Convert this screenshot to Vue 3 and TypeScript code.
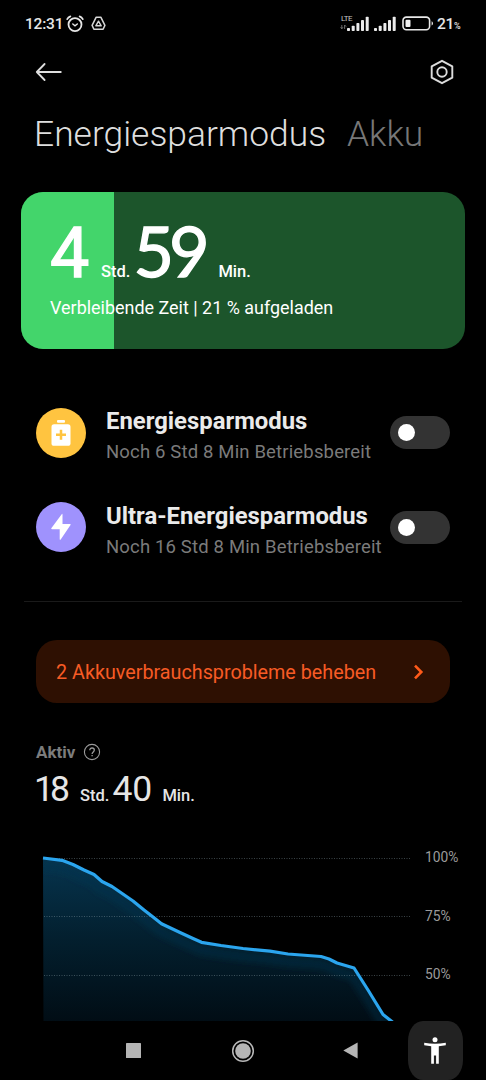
<script setup lang="ts">
interface SavingMode {
  id: 'saver' | 'ultra'
  title: string
  detail: string
}

const charge = 21

const modes: SavingMode[] = [
  { id: 'saver', title: 'Energiesparmodus', detail: 'Noch 6 Std 8 Min Betriebsbereit' },
  { id: 'ultra', title: 'Ultra-Energiesparmodus', detail: 'Noch 16 Std 8 Min Betriebsbereit' },
]

const levels: string[] = ['100%', '75%', '50%']

const curve: [number, number][] = [
  [43, 18], [62, 20.3], [73, 24.5], [84, 30], [94, 34.5], [102, 41.5], [112, 46.5],
  [133, 61], [144, 70], [153, 77], [161.5, 83.7], [180, 92.5], [193, 98.5], [201.5, 102.3],
  [221, 105.5], [243, 108.5], [270, 111.2], [288, 114], [321, 116.5], [329, 119],
  [337, 123], [354, 128], [368, 150], [383, 174.5], [395, 184],
]
const line = curve.map((p) => p.join(',')).join(' ')
const area = `${line} 395,190 43.5,190`
</script>

<template>
  <div class="screen">
    <header class="status">
      <div class="status-left">
        <span class="clock">12:31</span>
        <svg class="alarm" width="18" height="18" viewBox="0 0 18 18" fill="none" stroke="#e6e6e6" stroke-linecap="round">
          <circle cx="9" cy="9.6" r="6.5" stroke-width="1.8" />
          <path d="M6.8 9l2.2 1.8L11.3 9" stroke-width="1.5" />
          <path d="M1.2 4.2Q2.2 2.2 4.4 1.4M13.6 1.4Q15.8 2.2 16.8 4.2" stroke-width="1.7" />
        </svg>
        <svg class="drive" width="15" height="15" viewBox="0 0 15 15" fill="none" stroke="#d8d8d8" stroke-linejoin="round">
          <path d="M5.2 1.2h4.6l4.1 8.2-1.8 3.9H2.9L1.1 9.4z" stroke-width="1.5" />
          <path d="M7.5 5.2l2.7 4.6H4.8z" stroke-width="1.4" />
        </svg>
      </div>
      <div class="status-right">
        <div class="network">
          <span class="lte">LTE</span>
          <svg width="7" height="6" viewBox="0 0 7 6" fill="none" stroke="#777" stroke-width="0.9">
            <path d="M.6 3.2l1.2 1.6L3 3.2M1.8 4.8V1M4.6 5V1l1.5 1.6" />
          </svg>
        </div>
        <svg v-for="sim in 2" :key="sim" class="bars" width="22" height="15" viewBox="0 0 22 15" fill="#ececec">
          <rect x="0" y="12" width="3" height="3" rx="0.8" />
          <rect x="4.7" y="9.8" width="3" height="5.200" rx="0.8" />
          <rect x="9.400" y="7" width="3" height="8" rx="0.8" />
          <rect x="14" y="4" width="3" height="11" rx="0.8" />
          <rect x="18.700" y="0.8" width="3" height="14.200" rx="0.8" />
        </svg>
        <svg class="battery" width="32" height="15" viewBox="0 0 32 15">
          <rect x="1" y="1.1" width="26.6" height="12.6" rx="3.4" fill="none" stroke="#e8e8e8" stroke-width="1.6" />
          <rect x="3.5" y="3.7" width="5" height="7.4" rx="1" fill="#f0f0f0" />
          <path d="M29.6 5.3q1.4.5 1.4 2.1t-1.4 2.1z" fill="#e8e8e8" />
        </svg>
        <span class="percent">{{ charge }}<small>%</small></span>
      </div>
    </header>

    <nav class="toolbar">
      <svg width="28" height="20" viewBox="0 0 28 20" fill="none" stroke="#dedede" stroke-width="1.8" stroke-linecap="round" stroke-linejoin="round">
        <path d="M9.6 2L1.8 10l7.8 8M1.8 10h24" />
      </svg>
      <svg width="24" height="26" viewBox="0 0 24 26" fill="none" stroke="#dcdcdc" stroke-width="1.9" stroke-linejoin="round">
        <path d="M12 1.8l10.3 5.5v11.4L12 24.2 1.7 18.7V7.3z" />
        <circle cx="12" cy="13" r="4.7" />
      </svg>
    </nav>

    <div class="tabs">
      <span class="tab active">Energiesparmodus</span>
      <span class="tab">Akku</span>
    </div>

    <section class="card">
      <div class="fill" :style="{ width: charge + '%' }"></div>
      <div class="card-body">
        <div class="remaining">
          <span class="figure hours">4</span><span class="unit">Std.</span>
          <span class="figure minutes">59</span><span class="unit">Min.</span>
        </div>
        <div class="caption">Verbleibende Zeit | {{ charge }} % aufgeladen</div>
      </div>
    </section>

    <section class="modes">
      <div v-for="mode in modes" :key="mode.id" class="mode">
        <div class="badge" :class="mode.id">
          <svg v-if="mode.id === 'saver'" width="20" height="28" viewBox="0 0 20 28">
            <rect x="6" y="1" width="8" height="2.8" rx="1" fill="#fff" />
            <rect x="0.5" y="5.3" width="19" height="21.5" rx="2.6" fill="#fff" />
            <path d="M10 10.8v10M5 15.8h10" stroke="#ffc440" stroke-width="2.5" />
          </svg>
          <svg v-else width="20" height="28" viewBox="0 0 20 28">
            <path d="M10.7 1.2Q11.5.3 11.5 1.7V11H19q1.2 0 .5 1.1L9.7 26.4q-1 1.1-1-.3V16.2H1q-1.2 0-.5-1.1z" fill="#fff" />
          </svg>
        </div>
        <div class="labels">
          <div class="title">{{ mode.title }}</div>
          <div class="detail">{{ mode.detail }}</div>
        </div>
        <div class="switch"><i></i></div>
      </div>
    </section>

    <hr class="divider" />

    <section class="alert">
      <span>2 Akkuverbrauchsprobleme beheben</span>
      <svg width="11" height="16" viewBox="0 0 11 16" fill="none" stroke="#ff5a1a" stroke-width="2.6">
        <path d="M2 1.7L8.3 8 2 14.3" />
      </svg>
    </section>

    <section class="usage">
      <div class="usage-head">
        <span>Aktiv</span>
        <svg width="18" height="18" viewBox="0 0 18 18" fill="none" stroke="#9b9b9b" stroke-width="1.1">
          <circle cx="9" cy="9" r="7.6" />
          <path d="M6.8 7.2c0-3 4.5-2.8 4.5-.1 0 1.8-2.2 1.9-2.2 4M9.1 12v1.3" stroke-width="1.3" />
        </svg>
      </div>
      <div class="usage-time">
        <span class="count">18</span><span class="unit">Std.</span>
        <span class="count forty">40</span><span class="unit">Min.</span>
      </div>
    </section>

    <section class="chart">
      <svg width="420" height="181" viewBox="0 0 420 181">
        <defs>
          <linearGradient id="shade" x1="0" y1="18" x2="0" y2="181" gradientUnits="userSpaceOnUse">
            <stop offset="0" stop-color="#06344e" />
            <stop offset="0.5" stop-color="#031f2e" />
            <stop offset="1" stop-color="#010d15" />
          </linearGradient>
          <clipPath id="under"><polygon :points="area" /></clipPath>
          <filter id="soft"><feGaussianBlur stdDeviation="3" /></filter>
        </defs>
        <polygon :points="area" fill="url(#shade)" />
        <g clip-path="url(#under)">
          <polyline :points="line" transform="translate(-1 8)" fill="none" stroke="#0c3a50" stroke-opacity="0.42" stroke-width="9" filter="url(#soft)" />
        </g>
        <path d="M44 18.5H411M44 76.5H411M44 135.5H411" stroke="#8aa0a8" stroke-opacity="0.42" stroke-width="1" stroke-dasharray="1 1.5" />
        <polyline :points="line" fill="none" stroke="#2ba5ee" stroke-width="3.2" stroke-linejoin="round" />
      </svg>
      <div class="levels">
        <span v-for="level in levels" :key="level">{{ level }}</span>
      </div>
    </section>

    <footer class="navbar">
      <svg class="recent" width="15" height="15" viewBox="0 0 15 15"><rect width="15" height="15" rx="0.6" fill="#b5b5b5" /></svg>
      <svg class="home" width="24" height="24" viewBox="0 0 24 24">
        <circle cx="12" cy="12" r="10.3" fill="none" stroke="#b8b8b8" stroke-width="1.5" />
        <circle cx="12" cy="12" r="7.8" fill="#b5b5b5" />
      </svg>
      <svg class="back" width="15" height="17" viewBox="0 0 15 17"><path d="M14.6.5v16L.3 8.5z" fill="#b5b5b5" /></svg>
      <div class="access">
        <svg width="24" height="28" viewBox="0 0 24 28" fill="#fff">
          <circle cx="12" cy="3.8" r="2.5" />
          <path d="M1.2 6.8Q12 8.9 22.8 6.8v2.5q-3.5.7-7 .9v17.600h-2.700V19.600h-2.200v8.200H8.200V10.200q-3.500-.2-7-.9z" />
        </svg>
      </div>
    </footer>
  </div>
</template>

<style>
html,
body {
  background: #000;
}
</style>

<style scoped>
.screen {
  width: 486px;
  height: 1080px;
  overflow: hidden;
  display: flex;
  flex-direction: column;
  background: #000;
  color: #e6e6e6;
  font-family: Roboto, "Liberation Sans", sans-serif;
  white-space: nowrap;
}
svg {
  display: block;
  flex: none;
}
.status {
  height: 48px;
  display: flex;
  justify-content: space-between;
  padding: 0 24px 0 25px;
}
.status-left,
.status-right {
  display: flex;
  align-items: center;
  height: 47px;
}
.clock {
  width: 40px;
  font-size: 15.5px;
  font-weight: 500;
  line-height: 20px;
  letter-spacing: -0.2px;
}
.alarm {
  margin-left: 1px;
}
.drive {
  margin-left: 7px;
}
.network {
  display: flex;
  flex-direction: column;
  width: 12px;
  margin-right: -5px;
  gap: 1px;
}
.lte {
  font-size: 8px;
  line-height: 9px;
  letter-spacing: -0.5px;
  padding-left: 1px;
  margin-top: -3px;
  color: #c4c4c4;
}
.bars + .bars {
  margin-left: 5px;
}
.battery {
  margin-left: 6px;
}
.percent {
  margin-left: 3px;
  width: 25px;
  font-size: 15.5px;
  font-weight: 500;
  line-height: 20px;
  margin-top: 1px;
  letter-spacing: -0.3px;
}
.percent small {
  font-size: 9px;
  line-height: 1;
}
.toolbar {
  height: 48px;
  display: flex;
  align-items: center;
  justify-content: space-between;
  padding: 0 32px 0 35px;
}
.tabs {
  display: flex;
  height: 96px;
  padding-left: 34px;
}
.tab {
  font-size: 35.4px;
  font-weight: 300;
  line-height: 77px;
  color: #777;
}
.tab.active {
  width: 313px;
  color: #dedede;
}
.card {
  position: relative;
  height: 157px;
  margin: 0 21px;
  border-radius: 22px;
  overflow: hidden;
  background: #1c552b;
  color: #fff;
}
.fill {
  position: absolute;
  inset: 0 auto 0 0;
  background: #43d56b;
}
.card-body {
  position: relative;
  padding: 18px 0 0 29px;
}
.remaining {
  display: flex;
  align-items: baseline;
  height: 83px;
}
.figure {
  font-family: Lato, Roboto, sans-serif;
  font-size: 70px;
  line-height: 80px;
  -webkit-text-stroke: 1.3px #fff;
}
.hours {
  width: 51px;
  font-family: Roboto, sans-serif;
}
.minutes {
  width: 85px;
  margin-left: 3px;
  letter-spacing: -5px;
}
.unit {
  font-size: 16.5px;
  font-weight: 500;
}
.caption {
  font-size: 17.95px;
  line-height: 30px;
}
.modes {
  display: flex;
  flex-direction: column;
  gap: 32.5px;
  padding: 54px 36px 0;
}
.mode {
  display: flex;
  align-items: center;
  height: 62px;
  width: 414px;
}
.badge {
  display: grid;
  place-items: center;
  width: 50px;
  height: 50px;
  margin-top: -3px;
  border-radius: 50%;
}
.saver {
  background: #ffc440;
}
.ultra {
  background: #9f92fd;
}
.labels {
  width: 284px;
  margin: 4px 0 0 20px;
}
.title {
  font-size: 23.85px;
  font-weight: 700;
  line-height: 32px;
  color: #eaeaea;
}
.detail {
  font-size: 18.5px;
  letter-spacing: 0.16px;
  line-height: 30px;
  color: #7b7b7b;
}
.switch {
  flex: none;
  width: 60px;
  height: 33px;
  margin-top: -3px;
  border-radius: 17px;
  background: #333;
}
.switch i {
  display: block;
  width: 17px;
  height: 17px;
  margin: 8px;
  border-radius: 50%;
  background: #fff;
}
.divider {
  width: 438px;
  height: 1px;
  margin: 41.5px 24px 38px;
  border: 0;
  flex: none;
  background: #1a1a1a;
}
.alert {
  display: flex;
  flex: none;
  align-items: center;
  justify-content: space-between;
  width: 414px;
  height: 63px;
  box-sizing: border-box;
  margin-left: 36px;
  padding: 0 26px 0 20px;
  border-radius: 21px;
  background: #2e1002;
  color: #f75b25;
  font-size: 19.75px;
}
.alert span {
  padding-top: 2px;
}
.usage {
  height: 137px;
  padding: 38px 0 0 36px;
  box-sizing: border-box;
}
.usage-head {
  display: flex;
  align-items: center;
  height: 22px;
  gap: 8px;
  font-size: 17px;
  font-weight: 700;
  color: #7c7c7c;
}
.usage-time {
  display: flex;
  align-items: baseline;
  height: 44px;
  margin-top: 4px;
  line-height: 44px;
}
.count {
  width: 46px;
  margin-left: -2px;
  font-size: 35.5px;
  letter-spacing: -4px;
}
.forty {
  width: 50px;
  margin-left: 3px;
  letter-spacing: 0;
}
.chart {
  display: flex;
  height: 181px;
}
.levels {
  display: flex;
  flex-direction: column;
  gap: 38.5px;
  padding: 7px 0 0 5px;
  font-size: 13.8px;
  line-height: 20px;
  color: #9b9b9b;
}
.navbar {
  display: flex;
  align-items: center;
  height: 59px;
  padding-left: 126px;
  background: #000;
}
.home {
  margin-left: 90px;
}
.back {
  margin-left: 88px;
}
.access {
  display: flex;
  justify-content: center;
  width: 55px;
  height: 59px;
  margin-left: 50px;
  padding: 15px 1px 0 0;
  box-sizing: border-box;
  border-radius: 15px / 20px;
  background: #222;
}
</style>
